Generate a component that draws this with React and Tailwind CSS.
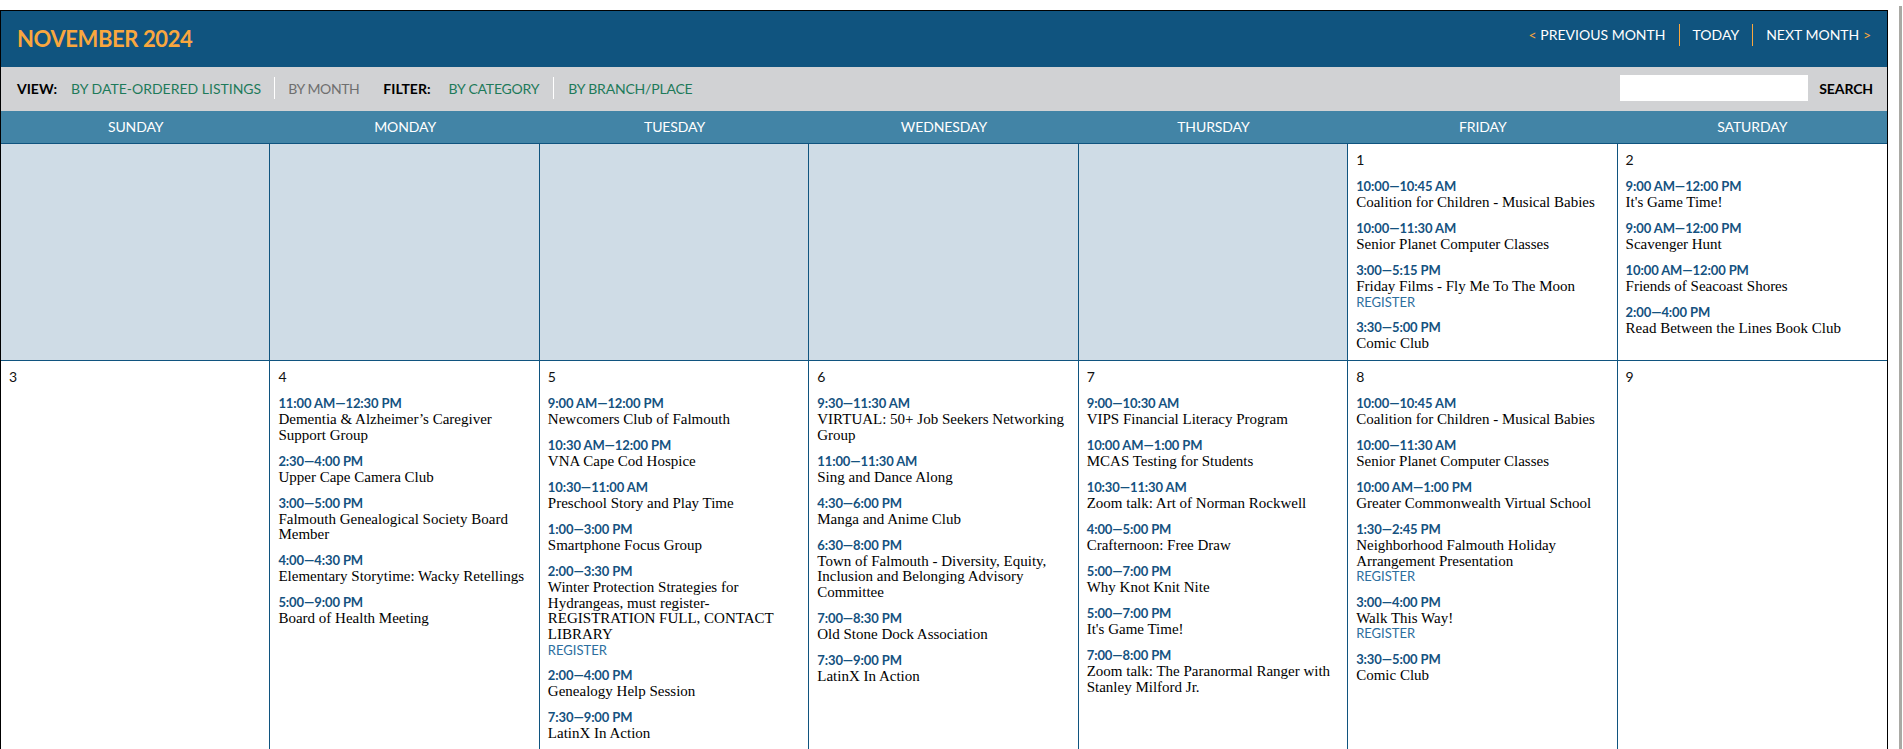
// App.jsx
import React from "react";

const days = ["Sunday", "Monday", "Tuesday", "Wednesday", "Thursday", "Friday", "Saturday"];

const firstWeek = [
  { date: 1, events: [
    { time: "10:00—10:45 AM", title: "Coalition for Children - Musical Babies" },
    { time: "10:00—11:30 AM", title: "Senior Planet Computer Classes" },
    { time: "3:00—5:15 PM", title: "Friday Films - Fly Me To The Moon", register: true },
    { time: "3:30—5:00 PM", title: "Comic Club" },
  ] },
  { date: 2, events: [
    { time: "9:00 AM—12:00 PM", title: "It's Game Time!" },
    { time: "9:00 AM—12:00 PM", title: "Scavenger Hunt" },
    { time: "10:00 AM—12:00 PM", title: "Friends of Seacoast Shores" },
    { time: "2:00—4:00 PM", title: "Read Between the Lines Book Club" },
  ] },
];

const secondWeek = [
  { date: 3, events: [] },
  { date: 4, events: [
    { time: "11:00 AM—12:30 PM", title: "Dementia & Alzheimer’s Caregiver Support Group" },
    { time: "2:30—4:00 PM", title: "Upper Cape Camera Club" },
    { time: "3:00—5:00 PM", title: "Falmouth Genealogical Society Board Member" },
    { time: "4:00—4:30 PM", title: "Elementary Storytime: Wacky Retellings" },
    { time: "5:00—9:00 PM", title: "Board of Health Meeting" },
  ] },
  { date: 5, events: [
    { time: "9:00 AM—12:00 PM", title: "Newcomers Club of Falmouth" },
    { time: "10:30 AM—12:00 PM", title: "VNA Cape Cod Hospice" },
    { time: "10:30—11:00 AM", title: "Preschool Story and Play Time" },
    { time: "1:00—3:00 PM", title: "Smartphone Focus Group" },
    { time: "2:00—3:30 PM", title: "Winter Protection Strategies for Hydrangeas, must register- REGISTRATION FULL, CONTACT LIBRARY", register: true },
    { time: "2:00—4:00 PM", title: "Genealogy Help Session" },
    { time: "7:30—9:00 PM", title: "LatinX In Action" },
  ] },
  { date: 6, events: [
    { time: "9:30—11:30 AM", title: "VIRTUAL: 50+ Job Seekers Networking Group" },
    { time: "11:00—11:30 AM", title: "Sing and Dance Along" },
    { time: "4:30—6:00 PM", title: "Manga and Anime Club" },
    { time: "6:30—8:00 PM", title: "Town of Falmouth - Diversity, Equity, Inclusion and Belonging Advisory Committee" },
    { time: "7:00—8:30 PM", title: "Old Stone Dock Association" },
    { time: "7:30—9:00 PM", title: "LatinX In Action" },
  ] },
  { date: 7, events: [
    { time: "9:00—10:30 AM", title: "VIPS Financial Literacy Program" },
    { time: "10:00 AM—1:00 PM", title: "MCAS Testing for Students" },
    { time: "10:30—11:30 AM", title: "Zoom talk: Art of Norman Rockwell" },
    { time: "4:00—5:00 PM", title: "Crafternoon: Free Draw" },
    { time: "5:00—7:00 PM", title: "Why Knot Knit Nite" },
    { time: "5:00—7:00 PM", title: "It's Game Time!" },
    { time: "7:00—8:00 PM", title: "Zoom talk: The Paranormal Ranger with Stanley Milford Jr." },
  ] },
  { date: 8, events: [
    { time: "10:00—10:45 AM", title: "Coalition for Children - Musical Babies" },
    { time: "10:00—11:30 AM", title: "Senior Planet Computer Classes" },
    { time: "10:00 AM—1:00 PM", title: "Greater Commonwealth Virtual School" },
    { time: "1:30—2:45 PM", title: "Neighborhood Falmouth Holiday Arrangement Presentation", register: true },
    { time: "3:00—4:00 PM", title: "Walk This Way!", register: true },
    { time: "3:30—5:00 PM", title: "Comic Club" },
  ] },
  { date: 9, events: [] },
];

const DayCell = ({ date, events }) => (
  <div className="border-r border-b border-[#10547f] bg-white px-2 pt-[7px] last:border-r-0">
    <div className="text-[14px] leading-[18px] text-[#111]">{date}</div>
    <div className="mt-[8px] flex flex-col gap-[8.3px]">
      {events.map((ev, i) => (
        <div key={i}>
          <div className="text-[13px] leading-[18px] font-bold tracking-[-0.1px] text-[#15527f]">{ev.time}</div>
          <div className="font-['Liberation_Serif',serif] text-[15px] leading-[15.7px] text-black">{ev.title}</div>
          {ev.register && (
            <div className="-mt-px text-[13px] leading-[16px] text-[#2c6e9e]">REGISTER</div>
          )}
        </div>
      ))}
    </div>
  </div>
);

const App = () => {
  return (
    <div className="h-[749px] overflow-hidden bg-white font-['Lato',sans-serif]">
      <div className="flex items-start pt-[10px]">
        <div className="w-[1888px] shrink-0 border-t border-l border-r border-black">
          {/* Month bar */}
          <div className="flex h-[56px] items-start justify-between bg-[#10547f] pr-[16px]">
            <h1 className="ml-[16px] mt-[14px] text-[22px] leading-[28px] font-bold tracking-[-0.4px] text-[#f9a73e]">NOVEMBER 2024</h1>
            <div className="mt-[13px] flex items-center text-[14px] leading-[22px] text-white">
              <span><span className="text-[#f9a73e]">&lt;</span> PREVIOUS MONTH</span>
              <span className="mx-[13px] h-[22px] w-px bg-[#f9a73e]"></span>
              <span>TODAY</span>
              <span className="mx-[13px] h-[22px] w-px bg-[#f9a73e]"></span>
              <span>NEXT MONTH <span className="text-[#f9a73e]">&gt;</span></span>
            </div>
          </div>

          {/* Filters */}
          <div className="flex h-[44px] items-center justify-between bg-[#d1d2d4] pb-[2px] pl-[16px] pr-[14px] text-[14px]">
            <div className="flex items-center">
              <span className="font-bold text-black">VIEW:</span>
              <span className="ml-[14px] text-[#1e7a5a]">BY DATE-ORDERED LISTINGS</span>
              <span className="mx-[13px] h-[22px] w-px bg-white"></span>
              <span className="tracking-[-0.4px] text-[#6f6f6f]">BY MONTH</span>
              <span className="ml-[24px] font-bold text-black">FILTER:</span>
              <span className="ml-[18px] tracking-[-0.2px] text-[#1e7a5a]">BY CATEGORY</span>
              <span className="mx-[14px] h-[22px] w-px bg-white"></span>
              <span className="tracking-[-0.2px] text-[#1e7a5a]">BY BRANCH/PLACE</span>
            </div>
            <div className="flex items-center gap-[11px] tracking-[-0.1px]">
              <input type="text" className="h-[26px] w-[188px] bg-white" />
              <span className="font-bold text-black">SEARCH</span>
            </div>
          </div>

          {/* Weekdays */}
          <div className="grid h-[33px] grid-cols-7 items-center border-b border-[#10547f] bg-[#4284a6] pb-[2px] text-center text-[14px] tracking-[-0.1px] text-white">
            {days.map((d) => (
              <div key={d} className="uppercase">{d}</div>
            ))}
          </div>

          {/* Week 1 */}
          <div className="grid h-[217px] grid-cols-7">
            {[0, 1, 2, 3, 4].map((n) => (
              <div key={n} className="border-r border-b border-[#10547f] bg-[#cfdce6]"></div>
            ))}
            {firstWeek.map((c) => (
              <DayCell key={c.date} date={c.date} events={c.events} />
            ))}
          </div>

          {/* Week 2 */}
          <div className="grid h-[400px] grid-cols-7">
            {secondWeek.map((c) => (
              <DayCell key={c.date} date={c.date} events={c.events} />
            ))}
          </div>
        </div>

        {/* scrollbar sliver */}
        <div className="ml-[11px] mt-[-4px] h-[760px] w-[3px] shrink-0 bg-[#a9a9a4]"></div>
      </div>
    </div>
  );
};

export default App;
